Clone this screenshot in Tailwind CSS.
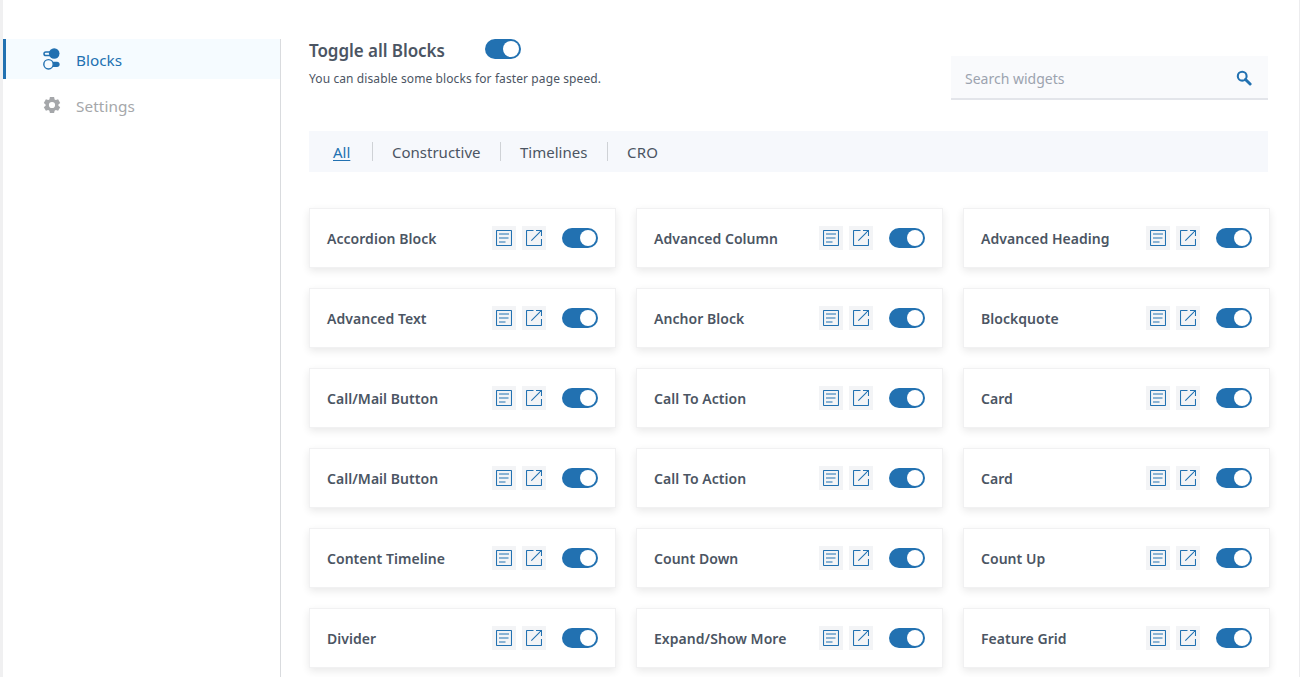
<!DOCTYPE html>
<html lang="en">
<head>
<meta charset="utf-8">
<title>Blocks</title>
<script src="https://cdn.jsdelivr.net/npm/@tailwindcss/browser@4"></script>
</head>
<body class="h-[677px] w-[1300px] overflow-hidden bg-white font-['Noto_Sans',sans-serif] text-[#4b5563]">
<div class="flex h-full border-l-[3px] border-r border-l-[#f0f0f1] border-r-[#ececee]">
  <aside class="w-[278px] shrink-0 pt-[39px]">
    <nav class="h-full border-r border-[#d9dbde]">
      <a class="flex h-10 items-center border-l-[3px] border-[#2271b1] bg-[#f5fbff] pl-[37px] text-[#2271b1]">
        <svg class="h-[22px] w-[18px] shrink-0" viewBox="0 0 18 22" fill="none" stroke="currentColor">
          <rect x="1" y="3.900" width="10" height="3.700" rx="1.850" stroke-width="1.500"/>
          <circle cx="11.200" cy="5.500" r="5.300" fill="currentColor" stroke="none"/>
          <rect x="8" y="13.700" width="8.600" height="5.200" rx="2.600" fill="currentColor" stroke="none"/>
          <circle cx="5.500" cy="16.300" r="4.700" fill="#f5fbff" stroke-width="1.400"/>
        </svg>
        <span class="ml-[15px] mt-[2px] text-[15.3px]">Blocks</span>
      </a>
      <a class="mt-[6px] flex h-10 items-center pl-10 text-[#a5a7aa]">
        <svg class="size-[18px] shrink-0" viewBox="0 0 18 18" fill="currentColor">
          <path fill-rule="evenodd" d="M6.900 1h4.200l.5 2.400 1.200.7 2.300-.8 2.100 3.600-1.800 1.600v1.200l1.800 1.500-2.100 3.600-2.300-.8-1.200.7-.5 2.300H6.900l-.5-2.300-1.200-.7-2.300.8-2.100-3.600 1.800-1.500V8.500L.8 6.900l2.100-3.600 2.300.8 1.200-.7ZM9 5.900a3.100 3.100 0 1 0 0 6.200 3.100 3.100 0 0 0 0-6.200Z"/>
        </svg>
        <span class="ml-[15px] mt-[3px] text-[15.3px] tracking-[0.1px]">Settings</span>
      </a>
    </nav>
  </aside>
  <main class="ml-7 w-[961px] shrink-0">
    <header class="flex h-[131px] w-[959px] justify-between">
      <div class="pt-[39px]">
        <div class="flex items-start">
          <h1 class="w-[176px] whitespace-nowrap text-[17px] font-semibold leading-6 tracking-[-0.06px]">Toggle all Blocks</h1>
          <span class="flex h-5 w-9 justify-end rounded-full bg-[#2271b1] p-[2px]"><i class="size-4 rounded-full bg-white"></i></span>
        </div>
        <p class="mt-[6px] whitespace-nowrap text-[12px] leading-[20px] tracking-[0.1px]">You can disable some blocks for faster page speed.</p>
      </div>
      <div class="mt-14 flex h-11 w-[317px] items-center justify-between border-b-2 border-[#e3e5ea] bg-[#f9fafc] pl-[14px] pr-4 text-[#9ca3af]">
        <span class="mt-[3px] text-[14px]">Search widgets</span>
        <svg class="mt-[2px] size-[16px] text-[#2271b1]" viewBox="0 0 16 16" fill="none" stroke="currentColor"><circle cx="6.2" cy="6.2" r="4.4" stroke-width="2.1"/><path d="m9.500 9.500 4.600 4.500" stroke-width="3" stroke-linecap="round"/></svg>
      </div>
    </header>
    <div class="flex h-[41px] w-[959px] items-center bg-[#f6f8fc] pl-6 text-[15px]">
      <span class="w-[39px] pt-[2px] text-[#2271b1] underline underline-offset-[2px]">All</span>
      <i class="h-[19px] w-px bg-[#cfd2d6]"></i>
      <span class="w-[127px] pl-[19px] pt-[2px]">Constructive</span>
      <i class="h-[19px] w-px bg-[#cfd2d6]"></i>
      <span class="w-[106px] pl-[19px] pt-[2px]">Timelines</span>
      <i class="h-[19px] w-px bg-[#cfd2d6]"></i>
      <span class="pl-[19px] pt-[2px] tracking-[0.2px]">CRO</span>
    </div>
    <section id="cards" class="mt-9 grid grid-cols-[307px_307px_307px] gap-5"></section>
  </main>
</div>
<script>
const names = ['Accordion Block','Advanced Column','Advanced Heading','Advanced Text','Anchor Block','Blockquote','Call/Mail Button','Call To Action','Card','Call/Mail Button','Call To Action','Card','Content Timeline','Count Down','Count Up','Divider','Expand/Show More','Feature Grid'];
document.getElementById('cards').innerHTML = names.map(n => `
<article class="flex h-[60px] items-center border border-[#f1f1f2] bg-white px-[17px] shadow-[0_3px_8px_rgba(0,0,0,0.09)]">
  <h2 class="grow whitespace-nowrap text-[14px] font-semibold tracking-[0.04px]">${n}</h2>
  <span class="flex size-6 items-center justify-center bg-[#f3f4f6] text-[#2271b1]">
    <svg class="size-4" viewBox="0 0 16 16" fill="none" stroke="currentColor"><rect x=".5" y=".5" width="15" height="15" rx=".6" stroke-width="1.1"/><path d="M3 4h10M3 8h9.500M3 12h6.500" stroke-width="2" opacity=".5"/></svg>
  </span>
  <span class="ml-[6px] flex size-6 items-center justify-center bg-[#f3f4f6] text-[#2271b1]">
    <svg class="size-4" viewBox="0 0 16 16" fill="none" stroke="currentColor" stroke-width="1.1"><path d="M7.500.5H1.200Q.5.5.5 1.200v13.600q0 .7.7.7h13.600q.7 0 .7-.7V9M10 .5h5.500V6M15.300.7 5.300 10.700"/></svg>
  </span>
  <span class="ml-4 flex h-5 w-9 justify-end rounded-full bg-[#2271b1] p-[2px]"><i class="size-4 rounded-full bg-white"></i></span>
</article>`).join('');
</script>
</body>
</html>
